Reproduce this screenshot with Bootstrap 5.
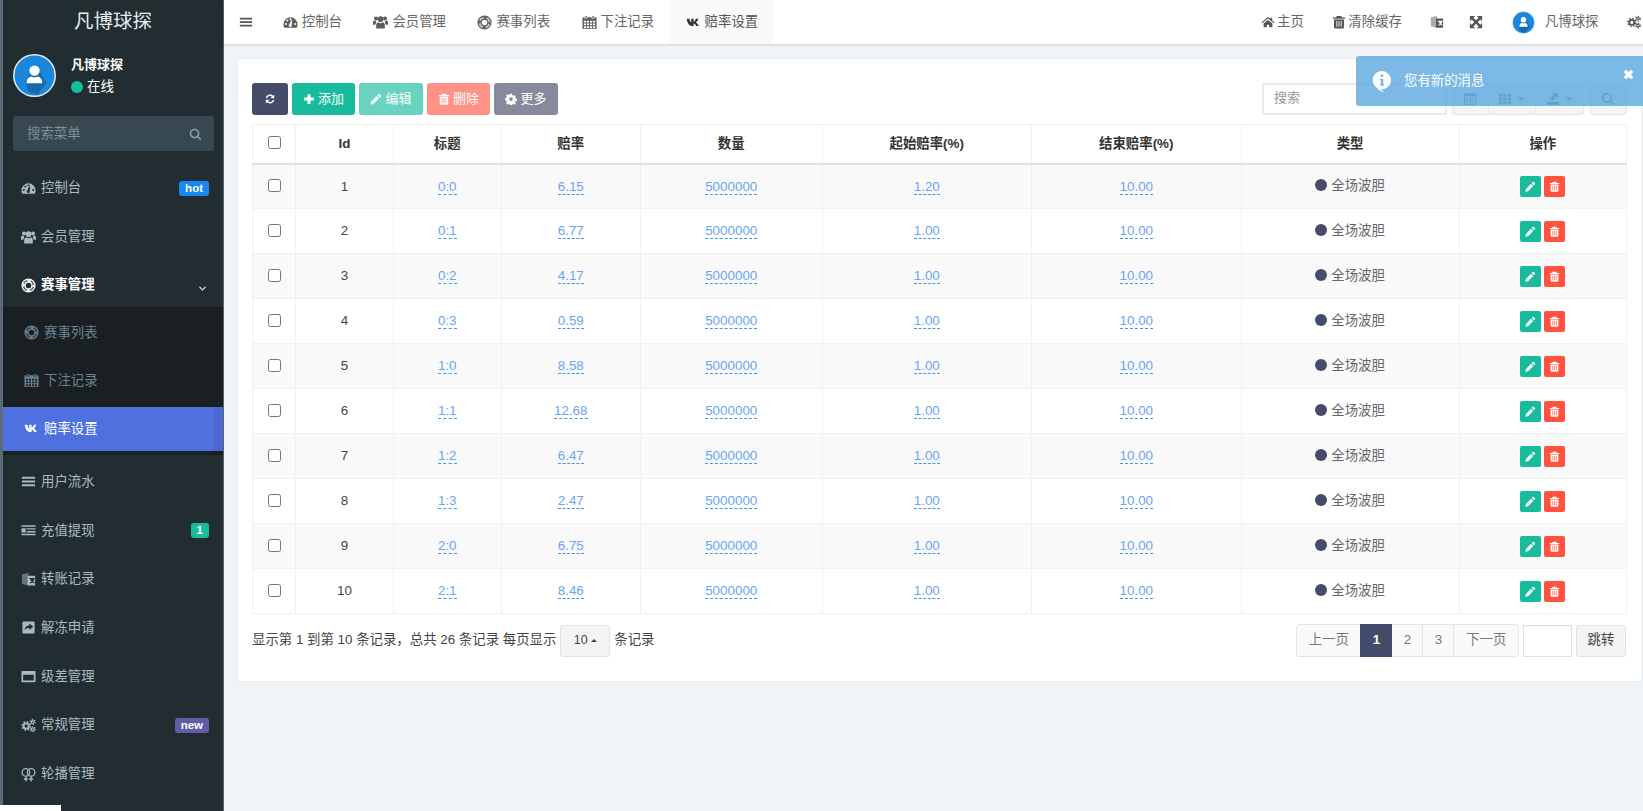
<!DOCTYPE html>
<html lang="zh-CN">
<head>
  <meta charset="UTF-8">
  <title>赔率设置</title>
  <link href="https://cdn.jsdelivr.net/npm/bootstrap@5.3.0/dist/css/bootstrap.min.css" rel="stylesheet">
  <style>
    html, body { height: 100%; overflow: hidden; }
    body { font-family: "Liberation Sans", "Noto Sans CJK SC", sans-serif; font-size: 13.4px; color: #444; background: #f1f4f6; }
    .ico { width: 1em; height: 1em; fill: currentColor; flex: none; }
    .app-shell { height: 811px; }

    /* sidebar */
    .side-bar { width: 224px; flex: none; background: #222d32; border-left: 3px solid #5b6a76; border-right: 1px solid #59646b; color: #b8c7ce; overflow: hidden; }
    .side-logo { height: 44px; flex: none; color: #e6ebee; font-size: 19.5px; line-height: 43px; text-align: center; }
    .side-user { height: 66px; flex: none; padding: 10px 0 0 10px; gap: 15px; }
    .side-avatar { width: 43px; height: 43px; flex: none; display: block; }
    .side-name { font-weight: 700; color: #fff; font-size: 13px; line-height: 16px; padding-top: 3px; }
    .side-online { margin-top: 6px; gap: 4px; color: #fff; line-height: 16px; }
    .side-dot { width: 12px; height: 12px; border-radius: 50%; background: #18bc9c; }
    .side-search { margin: 6px 9px 0 10px; height: 35px; flex: none; border-radius: 3px; background: #374850; padding: 1px 12px 0 14px; color: #7f9099; }
    .side-search .ico { font-size: 13px; color: #8c9ba3; }
    .side-menu { margin-top: 13px; flex-shrink: 0; }
    .side-link { height: 48.7px; flex: none; padding: 0 14px 0 18px; gap: 5px; color: #a9bac2; }
    .side-link .ico { font-size: 15px; }
    .side-link:hover { color: #fff; }
    .side-open { color: #fff; font-weight: 700; height: 45.9px; padding-top: 2px; }
    .side-sub { background: #191f22; padding: 1.7px 0 4px; margin-bottom: 2.6px; }
    .side-sub .side-link { height: 48px; padding-left: 21px; color: #6b8494; gap: 5px; }
    .side-sub .side-link.side-on { background: linear-gradient(to right, #4e71df 96%, #4a69d0 96%); color: #fff; height: 44.3px; margin-top: 1.7px; }
    .side-tag { margin-left: auto; font-size: 11.5px; font-weight: 700; padding: 1px 6px; border-radius: 3px; line-height: 13.5px; color: #fff; }
    .side-hot { background: #1688f1; }
    .side-green { background: #18bc9c; }
    .side-new { background: #605ca8; }
    .side-chev { margin-left: auto; margin-right: 2px; margin-top: 7px; font-size: 9px !important; color: #b8c7ce; }
    .side-corner { position: absolute; left: 0; bottom: 0; width: 61px; height: 6px; background: #fff; }

    /* top bar */
    .top-bar { height: 44px; flex: none; background: #fff; box-shadow: 0 1px 3px rgba(0, 0, 0, .14); color: #666; }
    .top-burger { padding: 0 14px 0 15px; color: #555; font-size: 14px; }
    .top-tab { padding: 0 15.75px; gap: 4px; color: #666; height: 44px; }
    .top-tab .ico { font-size: 15px; color: #5c5c5c; }
    .top-tab.top-on { background: #f9f9f9; color: #555; }
    .top-tab.top-on .ico { color: #333; }
    .top-tools { gap: 28.5px; padding-right: 3px; }
    .top-tool { gap: 2px; color: #666; }
    .top-tool .ico { font-size: 14px; color: #555; }
    .top-expand { margin-left: -3.5px; }
    .top-avatar { width: 23px; height: 23px; display: block; margin-right: 8px; }

    /* panel */
    .page-wrap { padding: 15px 3px 0 14px; }
    .data-panel { background: #fff; border-radius: 3px; padding: 24px 14px 0; height: 622px; box-shadow: 0 0 2px rgba(0, 0, 0, .08); }
    .tool-row { height: 32px; margin-bottom: 9px; }
    .tool-btn { height: 32px; padding: 0; font-size: 13px; border-radius: 3px; border: 1px solid transparent; color: #fff; display: inline-flex; align-items: center; justify-content: center; gap: 3px; margin-right: 4px; }
    .tool-btn .ico { font-size: 12px; }
    .tool-dark, .tool-dark:hover { background: #444c69; width: 36px; color: #fff; }
    .tool-add, .tool-add:hover { background: #18bc9c; width: 63px; color: #fff; }
    .tool-edit, .tool-edit:disabled { background: #18bc9c; border-color: transparent; width: 64px; color: #fff; opacity: .65; }
    .tool-del, .tool-del:disabled { background: #ff5e4d; border-color: transparent; width: 63px; color: #fff; opacity: .68; }
    .tool-more, .tool-more:disabled { background: #444c69; border-color: transparent; width: 64px; color: #fff; opacity: .65; margin-right: 0; }
    .find-box { width: 185px; height: 32px; font-size: 13px; border-radius: 0; border: 2px solid #e9ebee; padding: 0 10px 3px; color: #444; margin-right: 5px; }
    .find-box::placeholder { color: #999; }
    .view-group { height: 31px; border: 1px solid #e3e5e8; border-radius: 3px; background: #f4f4f4; color: #7f8b99; margin-right: 6px; }
    .view-cell { height: 100%; border-right: 1px solid #e3e5e8; justify-content: center; gap: 3px; font-size: 14px; }
    .view-cell:last-child { border-right: 0; }
    .view-a { width: 36px; }
    .view-b, .view-c { width: 47px; }
    .view-find { width: 37px; height: 31px; margin-right: 0; justify-content: center; font-size: 14px; }
    .view-caret { width: 0; height: 0; border: 4px solid transparent; border-top-color: #8b95a1; border-bottom: 0; margin-left: 2px; }

    /* table */
    .rate-table { table-layout: fixed; width: 1374px; margin: 0; font-size: 13.4px; --bs-table-border-color: #f1f1f1; --bs-table-striped-bg: #f9f9f9; --bs-table-striped-color: #444; --bs-table-color: #444; }
    .rate-table th, .rate-table td { padding: 0; text-align: center; vertical-align: middle; }
    .rate-table thead th { height: 39px; font-weight: 700; color: #333; border-bottom: 2px solid #dfe1e3; }
    .rate-table tbody td { height: 45px; }
    .rate-table tbody td:not(.type-cell) { padding-top: 1px; }
    .rate-table .form-check-input { width: 13px; height: 13px; margin: 0 auto 3px; border: 1px solid #767676; border-radius: 2.5px; display: block; float: none; }
    .col-w1 { width: 43px; } .col-w2 { width: 98px; } .col-w3 { width: 107.5px; } .col-w4 { width: 139.5px; }
    .col-w5 { width: 181.5px; } .col-w6 { width: 209.5px; } .col-w7 { width: 209.6px; } .col-w8 { width: 218px; } .col-w9 { width: 167.4px; }
    .edit-val { color: #6aa5f5; border-bottom: 1px dashed #3a9bea; text-decoration: none; display: inline-block; line-height: 15px; margin-top: 2px; }
    .type-dot { display: inline-block; width: 12px; height: 12px; border-radius: 50%; background: #444c69; vertical-align: -1px; margin-right: 4px; }
    .type-txt { color: #666; }
    .act-btn { width: 21px; height: 21px; padding: 0; border: 0; border-radius: 2px; display: inline-flex; align-items: center; justify-content: center; color: #fff; font-size: 11px; vertical-align: middle; }
    .act-edit, .act-edit:hover { background: #18bc9c; color: #fff; margin-right: 3px; }
    .act-del, .act-del:hover { background: #ff5340; color: #fff; }

    /* footer row */
    .foot-row { margin-top: 10px; padding-right: 1px; color: #444; }
    .size-btn { width: 50px; height: 32px; padding: 0; margin: 0 4px; border: 1px solid #e3e3e3; border-radius: 3px; background: #f4f4f4; color: #444; font-size: 12.5px; display: inline-flex; align-items: center; justify-content: center; gap: 3px; }
    .size-caret { width: 0; height: 0; border: 3.5px solid transparent; border-bottom-color: #444; border-top: 0; }
    .page-list { --bs-pagination-font-size: 13.4px; --bs-pagination-color: #777; --bs-pagination-bg: #fafafa; --bs-pagination-border-color: #e4e5e8; --bs-pagination-border-radius: 3px; --bs-pagination-active-bg: #444c69; --bs-pagination-active-border-color: #444c69; --bs-pagination-hover-color: #777; margin: 0 4px 0 0; }
    .page-list .page-link { height: 33px; padding: 0; display: flex; align-items: center; justify-content: center; }
    .page-wide .page-link { width: 65.5px; }
    .page-num .page-link { width: 32px; }
    .jump-box { width: 49px; height: 32px; border: 1px solid #dcdfe6; border-radius: 0; margin-right: 4px; padding: 0; }
    .jump-btn { width: 50px; height: 32px; padding: 0; font-size: 13.4px; border: 1px solid #e3e3e3; border-radius: 3px; background: #f4f4f4; color: #444; }

    /* toast */
    .note-toast { position: absolute; right: 0; top: 56px; width: 287px; height: 50px; background: rgba(91, 168, 224, .8); border-radius: 3px 0 0 3px; color: #fff; font-size: 13.4px; padding-left: 15px; gap: 11px; z-index: 5; }
    .note-toast .note-i { font-size: 22px; }
    .note-close { position: absolute; right: 9px; top: 13px; font-size: 11px; color: #fff; }
  </style>
</head>
<body class="position-relative">
  <svg width="0" height="0" class="position-absolute">
    <defs>
      <symbol id="i-dash" viewBox="0 0 16 16"><path fill-rule="evenodd" d="M8 2.500A7.500 7.500 0 0 0 .5 10c0 1.300.3 2.400.9 3.500h13.200c.6-1.100.9-2.200.9-3.500A7.500 7.500 0 0 0 8 2.500zM3 10.600a1.100 1.100 0 1 1 0-2.200 1.100 1.100 0 0 1 0 2.200zM4.600 7a1.100 1.100 0 1 1 0-2.200 1.100 1.100 0 0 1 0 2.200zM8 5.700a1.100 1.100 0 1 1 0-2.200 1.100 1.100 0 0 1 0 2.200zM13 10.600a1.100 1.100 0 1 1 0-2.200 1.100 1.100 0 0 1 0 2.200zM9.300 10.800a1.600 1.600 0 1 1-2.500-.9l2-4.400 1 .3-.5 4.800z"/></symbol>
      <symbol id="i-users" viewBox="0 0 16 16"><circle cx="3.200" cy="3.700" r="2.100"/><circle cx="12.800" cy="3.700" r="2.100"/><circle cx="8" cy="4.400" r="3"/><path d="M0 10.500V7.800C0 6.800.6 6.200 1.500 6.200h1.800c-.3.800-.3 1.600 0 2.300-.4.500-.8 1.200-.9 2H0zM16 10.500V7.800c0-1-.6-1.600-1.500-1.600h-1.800c.3.800.3 1.600 0 2.300.4.500.8 1.200.9 2H16zM3.400 13.800v-3c0-1.700 1.100-2.800 2.200-3 .7.600 1.500.9 2.400.9s1.700-.3 2.400-.9c1.100.2 2.200 1.300 2.200 3v3c0 .4-.5.700-1 .7H4.400c-.5 0-1-.3-1-.7z"/></symbol>
      <symbol id="i-ring" viewBox="0 0 16 16"><g fill="none" stroke="currentColor"><circle cx="8" cy="8" r="6.900" stroke-width="1.300"/><circle cx="8" cy="8" r="3.600" stroke-width="1.200"/><circle cx="8" cy="8" r="5.200" stroke-width="2.200" opacity=".35"/><circle cx="8" cy="8" r="5.200" stroke-width="2.200" stroke-dasharray="3.200 4.970" stroke-dashoffset="1.600"/></g></symbol>
      <symbol id="i-cal" viewBox="0 0 16 16"><path fill-rule="evenodd" d="M3.500 1h1.500v2h-1.500zM11 1h1.500v2H11zM1.200 2.500h1.500v1.300h3V2.500h4.600v1.300h3V2.500h1.500c.4 0 .7.3.7.7v11.100c0 .4-.3.700-.7.700H1.200c-.4 0-.7-.3-.7-.7V3.200c0-.4.3-.7.7-.7zM2 6v2h2.200V6zM5.100 6v2h2.400V6zM8.500 6v2h2.400V6zM11.800 6v2H14V6zM2 9v2h2.200V9zM5.100 9v2h2.400V9zM8.500 9v2h2.400V9zM11.800 9v2H14V9zM2 12v2h2.200v-2zM5.100 12v2h2.400v-2zM8.500 12v2h2.400v-2zM11.800 12v2H14v-2z"/></symbol>
      <symbol id="i-vk" viewBox="0 0 16 16"><path d="M0 4h2.800c.3 1.700 1.100 3.500 2 3.900V4h2.500v3.200c.9-.2 2-1.700 2.500-3.200h2.500c-.3 1.800-1.700 3.400-2.700 4 1.100.6 2.600 1.800 3.200 3.800H10c-.5-1.500-1.600-2.600-2.700-2.700v2.700h-1C2.800 11.800.5 9 0 4z" transform="translate(.8 0)"/></symbol>
      <symbol id="i-bars" viewBox="0 0 16 16"><path d="M1 3h14v2H1zM1 7h14v2H1zM1 11h14v2H1z"/></symbol>
      <symbol id="i-list" viewBox="0 0 16 16"><path fill-rule="evenodd" d="M.5 2.500h15v1.600H.5zM6 5.500h9.500v1.500H6zM6 8.500h9.500V10H6zM.5 11.500h15v1.600H.5zM.5 5.500H5V10H.5z"/></symbol>
      <symbol id="i-lang" viewBox="0 0 16 16"><path d="M1 2.500 8 1v13.500L1 12.800z" opacity=".5"/><path fill-rule="evenodd" d="M7 4h8v10.500H7zM9 6.500v1.200h1c.2 1 .7 1.900 1.300 2.500-.5.4-1.200.7-1.900.9l.4 1.100c.9-.3 1.600-.6 2.300-1.100.6.5 1.400.8 2.200 1l.4-1c-.7-.2-1.400-.5-1.900-.9.6-.7 1-1.500 1.200-2.500h.5V6.500z"/></symbol>
      <symbol id="i-share" viewBox="0 0 16 16"><path fill-rule="evenodd" d="M3 1.500h10c1 0 1.500.5 1.500 1.500v10c0 1-.5 1.500-1.500 1.500H3c-1 0-1.500-.5-1.500-1.500V3c0-1 .5-1.500 1.500-1.500zM9 3.500v2C5.800 5.700 4 7.500 3.800 11c1-1.700 2.800-2.600 5.200-2.500v2.200l4-3.600z"/></symbol>
      <symbol id="i-win" viewBox="0 0 16 16"><path fill-rule="evenodd" d="M1.500 2h13c.6 0 1 .4 1 1v10c0 .6-.4 1-1 1h-13c-.6 0-1-.4-1-1V3c0-.6.4-1 1-1zM2.300 6v6.300h11.400V6z"/></symbol>
      <symbol id="i-gears" viewBox="0 0 16 16"><g fill="none" stroke="currentColor"><circle cx="5.500" cy="8.500" r="2.800" stroke-width="2"/><circle cx="5.500" cy="8.500" r="4.400" stroke-width="1.700" stroke-dasharray="1.750 1.700"/><circle cx="12.500" cy="4.200" r="1.500" stroke-width="1.300"/><circle cx="12.500" cy="4.200" r="2.700" stroke-width="1.200" stroke-dasharray="1.400 1.430"/><circle cx="12.500" cy="12" r="1.500" stroke-width="1.300"/><circle cx="12.500" cy="12" r="2.700" stroke-width="1.200" stroke-dasharray="1.400 1.430"/></g></symbol>
      <symbol id="i-venus" viewBox="0 0 16 16"><g fill="none" stroke="currentColor" stroke-width="1.400"><circle cx="5.200" cy="5.800" r="4"/><circle cx="10.800" cy="5.800" r="4"/><path d="M5.200 9.800V15.500M10.800 9.800V15.500M3 12.800h4.400M8.600 12.800H13"/></g></symbol>
      <symbol id="i-search" viewBox="0 0 16 16"><path fill="none" stroke="currentColor" stroke-width="2" d="M6.800 1.800a5 5 0 1 1 0 10 5 5 0 0 1 0-10zM10.500 10.500l4 4"/></symbol>
      <symbol id="i-chev" viewBox="0 0 16 16"><path fill="none" stroke="currentColor" stroke-width="2.600" d="M2.500 5 8 10.500 13.500 5"/></symbol>
      <symbol id="i-home" viewBox="0 0 16 16"><path d="M8 2.200 .5 8.500l.8 1L8 4l6.700 5.500.8-1L12.800 6.200V3h-2v1.500zM3 9.800V14h3.700v-3h2.600v3H13V9.800L8 5.600z"/></symbol>
      <symbol id="i-trash" viewBox="0 0 16 16"><path fill-rule="evenodd" d="M5.500 1h5l1 1.800H15v1.400H1V2.800h3.500zM2.300 5h11.400v8.800c0 .9-.5 1.700-1.300 1.700H3.600c-.8 0-1.300-.8-1.300-1.700zM5 6.800v6.700h1V6.800zM7.500 6.800v6.700h1V6.800zM10 6.800v6.700h1V6.800z"/></symbol>
      <symbol id="i-expand" viewBox="0 0 16 16"><path d="M1 1h6L5 3 8 6l3-3-2-2h6v6l-2-2-3 3 3 3 2-2v6H9l2-2-3-3-3 3 2 2H1V9l2 2 3-3-3-3-2 2z"/></symbol>
      <symbol id="i-sync" viewBox="0 0 16 16"><path d="M2.300 6.700C2.900 3.900 5.200 2 8 2c1.600 0 3 .6 4 1.600L13.600 2v5H8.700l1.900-1.900C10 4.500 9 4.100 8 4.100c-1.900 0-3.300 1.100-3.700 2.600zM13.700 9.300C13.100 12.100 10.800 14 8 14c-1.600 0-3-.6-4-1.600L2.400 14V9h4.900l-1.900 1.900c.6.6 1.600 1 2.600 1 1.900 0 3.300-1.100 3.700-2.600z"/></symbol>
      <symbol id="i-plus" viewBox="0 0 16 16"><path d="M6 1.500h4V6h4.500v4H10v4.500H6V10H1.500V6H6z"/></symbol>
      <symbol id="i-pencil" viewBox="0 0 16 16"><path d="M11.200 1.500c.5-.5 1.200-.5 1.700 0l1.600 1.600c.5.5.5 1.200 0 1.700l-1.500 1.500-3.300-3.300zM8.700 4l3.300 3.300-7.500 7.500-4 .9.900-4z"/></symbol>
      <symbol id="i-cog" viewBox="0 0 16 16"><path fill-rule="evenodd" d="M6.700 1h2.600l.4 1.900 1.300.6 1.700-1 1.800 1.800-1 1.700.6 1.300 1.900.4v2.600l-1.900.4-.6 1.300 1 1.700-1.800 1.800-1.700-1-1.300.6-.4 1.900H6.700l-.4-1.900-1.300-.6-1.700 1-1.800-1.800 1-1.700-.6-1.300L0 9.300V6.700l1.900-.4.6-1.300-1-1.700 1.800-1.800 1.700 1 1.300-.6zM8 5.500a2.500 2.500 0 1 0 0 5 2.500 2.500 0 0 0 0-5z"/></symbol>
      <symbol id="i-listalt" viewBox="0 0 16 16"><path fill-rule="evenodd" d="M1 1.500h14v13H1zM2.200 4.500v8.800h11.600V4.500zM3.500 6h2v1.200h-2zM6.500 6h6v1.200h-6zM3.500 8.300h2v1.200h-2zM6.500 8.300h6v1.200h-6zM3.500 10.600h2v1.200h-2zM6.500 10.600h6v1.200h-6z"/></symbol>
      <symbol id="i-grid" viewBox="0 0 16 16"><path d="M1 2h4v3.500H1zM6 2h4v3.500H6zM11 2h4v3.500h-4zM1 6.300h4v3.500H1zM6 6.300h4v3.500H6zM11 6.300h4v3.500h-4zM1 10.600h4v3.500H1zM6 10.600h4v3.500H6zM11 10.600h4v3.500h-4z"/></symbol>
      <symbol id="i-export" viewBox="0 0 16 16"><path d="M7 1h7v6l-2-2-3.500 4H5c.3-3 1.800-4.800 4-5.600zM1 11h14v3.500H1z"/></symbol>
      <symbol id="i-info" viewBox="0 0 22 24"><path fill-rule="evenodd" d="M11 1a10 10 0 1 1-1.500 19.900c1.200 1.300 2.500 2 4.500 2.400-3 .6-6-.3-8.300-3.700A10 10 0 0 1 11 1zM9.700 5v2.500h2.700V5zM8.800 9.500v1.300h.9v5h-.9v1.300h4.400v-1.300h-.8V9.500z"/></symbol>
      <symbol id="i-times" viewBox="0 0 16 16"><path d="M4.500 1 8 4.500 11.500 1 15 4.500 11.500 8l3.500 3.500-3.500 3.500L8 11.500 4.500 15 1 11.500 4.500 8 1 4.500z"/></symbol>
      <symbol id="i-avatar" viewBox="0 0 44 44"><circle cx="22" cy="22" r="21.200" fill="#1a87dc" stroke="#e8edf0" stroke-width="1.500"/><path d="M13 28 17 21l11-2 6 11-9 12a20 20 0 0 1-10-5z" fill="#175f9c" opacity=".75"/><circle cx="22" cy="17" r="5.300" fill="#fff"/><path d="M14 30c0-4.500 2-6.500 4.800-7 2 1.200 4.400 1.200 6.400 0 2.800.5 4.800 2.500 4.800 7z" fill="#fff"/></symbol>
    </defs>
  </svg>

  <div class="d-flex app-shell">
    <aside class="side-bar d-flex flex-column">
      <div class="side-logo">凡博球探</div>
      <div class="side-user d-flex">
        <svg class="side-avatar"><use href="#i-avatar"/></svg>
        <div>
          <div class="side-name">凡博球探</div>
          <div class="side-online d-flex align-items-center"><span class="side-dot"></span>在线</div>
        </div>
      </div>
      <div class="side-search d-flex align-items-center justify-content-between">
        <span>搜索菜单</span>
        <svg class="ico"><use href="#i-search"/></svg>
      </div>
      <nav class="side-menu nav flex-column flex-nowrap" id="sideMenu"></nav>
    </aside>

    <main class="flex-grow-1 d-flex flex-column">
      <header class="top-bar d-flex align-items-center">
        <a class="top-burger d-flex" href="#"><svg class="ico"><use href="#i-bars"/></svg></a>
        <a class="top-tab d-flex align-items-center text-decoration-none" href="#"><svg class="ico"><use href="#i-dash"/></svg>控制台</a>
        <a class="top-tab d-flex align-items-center text-decoration-none" href="#"><svg class="ico"><use href="#i-users"/></svg>会员管理</a>
        <a class="top-tab d-flex align-items-center text-decoration-none" href="#"><svg class="ico"><use href="#i-ring"/></svg>赛事列表</a>
        <a class="top-tab d-flex align-items-center text-decoration-none" href="#"><svg class="ico"><use href="#i-cal"/></svg>下注记录</a>
        <a class="top-tab top-on d-flex align-items-center text-decoration-none" href="#"><svg class="ico"><use href="#i-vk"/></svg>赔率设置</a>
        <div class="top-tools d-flex align-items-center ms-auto">
          <a class="top-tool d-flex align-items-center text-decoration-none" href="#"><svg class="ico"><use href="#i-home"/></svg>主页</a>
          <a class="top-tool d-flex align-items-center text-decoration-none" href="#"><svg class="ico"><use href="#i-trash"/></svg>清除缓存</a>
          <a class="top-tool d-flex" href="#"><svg class="ico"><use href="#i-lang"/></svg></a>
          <a class="top-tool top-expand d-flex" href="#"><svg class="ico"><use href="#i-expand"/></svg></a>
          <a class="top-tool d-flex align-items-center text-decoration-none" href="#"><svg class="top-avatar"><use href="#i-avatar"/></svg>凡博球探</a>
          <a class="top-tool d-flex" href="#"><svg class="ico"><use href="#i-gears"/></svg></a>
        </div>
      </header>

      <div class="page-wrap">
        <section class="data-panel">
          <div class="tool-row d-flex align-items-center">
            <a class="btn tool-btn tool-dark" href="#"><svg class="ico"><use href="#i-sync"/></svg></a>
            <a class="btn tool-btn tool-add" href="#"><svg class="ico"><use href="#i-plus"/></svg>添加</a>
            <button class="btn tool-btn tool-edit" disabled><svg class="ico"><use href="#i-pencil"/></svg>编辑</button>
            <button class="btn tool-btn tool-del" disabled><svg class="ico"><use href="#i-trash"/></svg>删除</button>
            <button class="btn tool-btn tool-more" disabled><svg class="ico"><use href="#i-cog"/></svg>更多</button>
            <input class="form-control find-box ms-auto" type="text" placeholder="搜索">
            <div class="view-group d-flex align-items-center">
              <span class="view-cell view-a d-flex align-items-center"><svg class="ico"><use href="#i-listalt"/></svg></span>
              <span class="view-cell view-b d-flex align-items-center"><svg class="ico"><use href="#i-grid"/></svg><i class="view-caret"></i></span>
              <span class="view-cell view-c d-flex align-items-center"><svg class="ico"><use href="#i-export"/></svg><i class="view-caret"></i></span>
            </div>
            <div class="view-group view-find d-flex align-items-center"><svg class="ico"><use href="#i-search"/></svg></div>
          </div>

          <table class="table table-bordered table-striped rate-table">
            <colgroup>
              <col class="col-w1"><col class="col-w2"><col class="col-w3"><col class="col-w4"><col class="col-w5"><col class="col-w6"><col class="col-w7"><col class="col-w8"><col class="col-w9">
            </colgroup>
            <thead>
              <tr>
                <th><input class="form-check-input" type="checkbox"></th>
                <th>Id</th><th>标题</th><th>赔率</th><th>数量</th><th>起始赔率(%)</th><th>结束赔率(%)</th><th>类型</th><th>操作</th>
              </tr>
            </thead>
            <tbody id="rateRows"></tbody>
          </table>

          <div class="foot-row d-flex align-items-center">
            <span>显示第 1 到第 10 条记录，总共 26 条记录 每页显示</span>
            <button class="size-btn">10<i class="size-caret"></i></button>
            <span>条记录</span>
            <ul class="pagination page-list ms-auto">
              <li class="page-item page-wide"><a class="page-link" href="#">上一页</a></li>
              <li class="page-item page-num active"><a class="page-link fw-bold" href="#">1</a></li>
              <li class="page-item page-num"><a class="page-link" href="#">2</a></li>
              <li class="page-item page-num"><a class="page-link" href="#">3</a></li>
              <li class="page-item page-wide"><a class="page-link" href="#">下一页</a></li>
            </ul>
            <input class="form-control jump-box" type="text">
            <button class="btn jump-btn">跳转</button>
          </div>
        </section>
      </div>
    </main>
  </div>

  <div class="note-toast d-flex align-items-center">
    <svg class="ico note-i"><use href="#i-info"/></svg>
    <span>您有新的消息</span>
    <svg class="ico note-close"><use href="#i-times"/></svg>
  </div>
  <div class="side-corner"></div>

  <script>
    const menu = [
      { icon: 'dash', text: '控制台', tag: 'hot', tagClass: 'side-hot' },
      { icon: 'users', text: '会员管理' },
      { icon: 'ring', text: '赛事管理', open: true },
      { icon: 'ring', text: '赛事列表', sub: true },
      { icon: 'cal', text: '下注记录', sub: true },
      { icon: 'vk', text: '赔率设置', sub: true, on: true },
      { icon: 'bars', text: '用户流水' },
      { icon: 'list', text: '充值提现', tag: '1', tagClass: 'side-green' },
      { icon: 'lang', text: '转账记录' },
      { icon: 'share', text: '解冻申请' },
      { icon: 'win', text: '级差管理' },
      { icon: 'gears', text: '常规管理', tag: 'new', tagClass: 'side-new' },
      { icon: 'venus', text: '轮播管理' }
    ];
    const link = m => `
      <a class="side-link d-flex align-items-center text-decoration-none ${m.open ? 'side-open' : ''} ${m.on ? 'side-on' : ''}" href="#">
        <svg class="ico"><use href="#i-${m.icon}"/></svg><span>${m.text}</span>
        ${m.tag ? `<span class="side-tag ${m.tagClass}">${m.tag}</span>` : ''}
        ${m.open ? '<svg class="ico side-chev"><use href="#i-chev"/></svg>' : ''}
      </a>`;
    document.getElementById('sideMenu').innerHTML =
      menu.slice(0, 3).map(link).join('') +
      `<div class="side-sub">${menu.filter(m => m.sub).map(link).join('')}</div>` +
      menu.slice(6).map(link).join('');

    const rows = [
      ['0:0', '6.15', '1.20'], ['0:1', '6.77', '1.00'], ['0:2', '4.17', '1.00'], ['0:3', '0.59', '1.00'], ['1:0', '8.58', '1.00'],
      ['1:1', '12.68', '1.00'], ['1:2', '6.47', '1.00'], ['1:3', '2.47', '1.00'], ['2:0', '6.75', '1.00'], ['2:1', '8.46', '1.00']
    ];
    document.getElementById('rateRows').innerHTML = rows.map((r, i) => `
      <tr>
        <td><input class="form-check-input" type="checkbox"></td>
        <td>${i + 1}</td>
        <td><a class="edit-val" href="#">${r[0]}</a></td>
        <td><a class="edit-val" href="#">${r[1]}</a></td>
        <td><a class="edit-val" href="#">5000000</a></td>
        <td><a class="edit-val" href="#">${r[2]}</a></td>
        <td><a class="edit-val" href="#">10.00</a></td>
        <td class="type-cell"><span class="type-dot"></span><span class="type-txt">全场波胆</span></td>
        <td>
          <a class="btn act-btn act-edit" href="#"><svg class="ico"><use href="#i-pencil"/></svg></a><a class="btn act-btn act-del" href="#"><svg class="ico"><use href="#i-trash"/></svg></a>
        </td>
      </tr>`).join('');
  </script>
  <script src="https://cdn.jsdelivr.net/npm/bootstrap@5.3.0/dist/js/bootstrap.bundle.min.js"></script>
</body>
</html>
